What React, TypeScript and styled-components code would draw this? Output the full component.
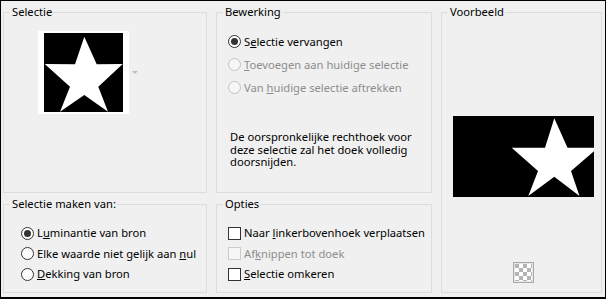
import React from 'react'
import styled, { createGlobalStyle } from 'styled-components'

const GlobalStyle = createGlobalStyle`
  html, body {
    margin: 0;
    padding: 0;
    background: #f0f0f0;
  }
  body {
    font-family: "Noto Sans", "Segoe UI", sans-serif;
    font-size: 11.2px;
    color: #000;
  }
`

const Dialog = styled.div`
  box-sizing: border-box;
  width: 606px;
  height: 299px;
  border: 1px solid #000;
  border-bottom-width: 2px;
  background: #f0f0f0;
  padding: 3px 3px 4px 2px;
  display: grid;
  grid-template-columns: 204px 216px 161px;
  grid-template-rows: 189px 97px;
  column-gap: 9px;
  row-gap: 3px;
`

const Group = styled.fieldset<{ $tall?: boolean }>`
  box-sizing: border-box;
  margin: 0;
  padding: 0;
  min-width: 0;
  min-height: 0;
  border: 1px solid #dcdcdc;
  display: flex;
  flex-direction: column;
  ${p => (p.$tall ? 'grid-row: 1 / span 2; grid-column: 3;' : '')}
`

const Caption = styled.legend`
  margin-left: 6px;
  padding: 0 1px 0 2px;
  line-height: 16px;
  white-space: nowrap;
`

/* Selectie */
const ThumbRow = styled.div`
  display: flex;
  align-items: center;
  gap: 3px;
  padding: 11px 0 0 34px;
`

const Thumb = styled.div`
  width: 91px;
  height: 83px;
  background: #fff;
  display: flex;
  align-items: center;
  justify-content: center;
`

const DropArrow = styled.span`
  width: 0;
  height: 0;
  border-left: 3px solid transparent;
  border-right: 3px solid transparent;
  border-top: 3px solid #bdbdbd;
`

/* options */
const OptionList = styled.div<{ $left: number; $top: number; $row: number }>`
  display: flex;
  flex-direction: column;
  padding: ${p => p.$top}px 0 0 ${p => p.$left}px;

  & > label {
    height: ${p => p.$row}px;
  }
`

const Option = styled.label<{ $disabled?: boolean }>`
  display: flex;
  align-items: center;
  gap: 3px;
  color: ${p => (p.$disabled ? '#8d8d8d' : '#000')};
  white-space: nowrap;
  line-height: 14px;
`

const RadioMark = styled.span<{ $checked?: boolean; $disabled?: boolean }>`
  box-sizing: border-box;
  flex: none;
  width: 13px;
  height: 13px;
  border-radius: 50%;
  border: 1px solid ${p => (p.$disabled ? '#c2c2c2' : '#333')};
  background: ${p => (p.$disabled ? '#f6f6f6' : '#fff')};
  display: flex;
  align-items: center;
  justify-content: center;

  &::after {
    content: '';
    width: 7px;
    height: 7px;
    border-radius: 50%;
    background: #333;
    display: ${p => (p.$checked ? 'block' : 'none')};
  }
`

const CheckMark = styled.span<{ $disabled?: boolean }>`
  box-sizing: border-box;
  flex: none;
  width: 13px;
  height: 13px;
  border: 1px solid ${p => (p.$disabled ? '#cccccc' : '#333')};
  background: ${p => (p.$disabled ? '#f6f6f6' : '#fff')};
`

const Note = styled.p`
  margin: 32px 0 0 0;
  padding-left: 13px;
  width: 195px;
  line-height: 12.5px;
`

/* Voorbeeld */
const Preview = styled.div`
  margin: 96px 0 0 11px;
  width: 141px;
  height: 81px;
  background: #000;
`

const CheckerButton = styled.div`
  box-sizing: border-box;
  margin: 65px 0 0 71px;
  width: 21px;
  height: 21px;
  border: 1px solid #a8a8a8;
  padding: 1px;
  background: #e6e6e6;
`

const Checker = styled.div`
  width: 100%;
  height: 100%;
  background: repeating-conic-gradient(#fff 0 25%, #b4b4b4 0 50%) 0 0 / 8px 8px;
`

const Radio = ({ checked, disabled, children }: { checked?: boolean; disabled?: boolean; children: React.ReactNode }) => (
  <Option $disabled={disabled}>
    <RadioMark $checked={checked} $disabled={disabled} />
    <span>{children}</span>
  </Option>
)

const Check = ({ disabled, children }: { disabled?: boolean; children: React.ReactNode }) => (
  <Option $disabled={disabled}>
    <CheckMark $disabled={disabled} />
    <span>{children}</span>
  </Option>
)

export default function App() {
  return (
    <>
      <GlobalStyle />
      <Dialog>
        <Group>
          <Caption>Selectie</Caption>
          <ThumbRow>
            <Thumb>
              <svg width="79" height="79" viewBox="0 0 79 79">
                <rect width="79" height="79" fill="#000" />
                <polygon
                  fill="#fff"
                  points="40.3,3.7 52.7,31.3 78.7,31 54.3,53.7 64,78.7 40.3,62 16,78.7 26,53.7 0.7,31 31,31.3"
                />
              </svg>
            </Thumb>
            <DropArrow />
          </ThumbRow>
        </Group>

        <Group>
          <Caption>Bewerking</Caption>
          <OptionList $left={11} $top={10} $row={23}>
            <Radio checked>
              S<u>e</u>lectie vervangen
            </Radio>
            <Radio disabled>
              <u>T</u>oevoegen aan huidige selectie
            </Radio>
            <Radio disabled>
              Van <u>h</u>uidige selectie aftrekken
            </Radio>
          </OptionList>
          <Note>De oorspronkelijke rechthoek voor deze selectie zal het doek volledig doorsnijden.</Note>
        </Group>

        <Group $tall>
          <Caption>Voorbeeld</Caption>
          <Preview>
            <svg width="141" height="81" viewBox="0 0 141 81">
              <polygon
                fill="#fff"
                points="101.3,2.3 114.5,31.7 145,31.7 118,55 126.5,80 101.3,60.7 75.3,80 85,55 58.7,31.7 92,31.7"
              />
            </svg>
          </Preview>
          <CheckerButton>
            <Checker />
          </CheckerButton>
        </Group>

        <Group>
          <Caption>Selectie maken van:</Caption>
          <OptionList $left={17} $top={11} $row={20.5}>
            <Radio checked>
              L<u>u</u>minantie van bron
            </Radio>
            <Radio>
              Elke waarde niet gelijk aan <u>n</u>ul
            </Radio>
            <Radio>
              <u>D</u>ekking van bron
            </Radio>
          </OptionList>
        </Group>

        <Group>
          <Caption>Opties</Caption>
          <OptionList $left={11} $top={11} $row={20.5}>
            <Check>
              Naar <u>l</u>inkerbovenhoek verplaatsen
            </Check>
            <Check disabled>
              Af<u>k</u>nippen tot doek
            </Check>
            <Check>
              <u>S</u>electie omkeren
            </Check>
          </OptionList>
        </Group>
      </Dialog>
    </>
  )
}
